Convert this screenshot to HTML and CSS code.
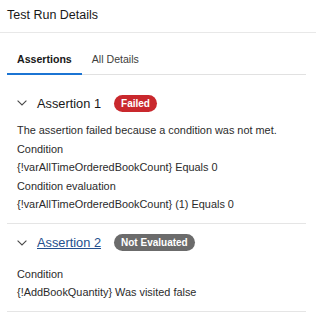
FILE: index.html
```html
<!DOCTYPE html>
<html lang="en">
<head>
    <meta charset="UTF-8">
    <meta name="viewport" content="width=device-width, initial-scale=1.0">
    <title>Test Run Details</title>
    <link rel="stylesheet" href="styles.css">
</head>
<body>
    <div class="header">Test Run Details</div>
    <div class="content">
        <div class="tabs">
            <div class="tab active">Assertions</div>
            <div class="tab">All Details</div>
        </div>

        <div class="section">
            <div class="section-head">
                <svg class="chevron" width="10" height="6" viewBox="0 0 10 6"><path d="M0.6 0.6 L5 5 L9.4 0.6" fill="none" stroke="#4a4a4a" stroke-width="1.1"/></svg>
                <span class="section-title">Assertion 1</span>
                <span class="badge badge-error">Failed</span>
            </div>
            <div class="section-body">
                <div class="line">The assertion failed because a condition was not met.</div>
                <div class="line">Condition</div>
                <div class="line">{!varAllTimeOrderedBookCount} Equals 0</div>
                <div class="line">Condition evaluation</div>
                <div class="line">{!varAllTimeOrderedBookCount} (1) Equals 0</div>
            </div>
        </div>

        <div class="section">
            <div class="section-head">
                <svg class="chevron" width="10" height="6" viewBox="0 0 10 6"><path d="M0.6 0.6 L5 5 L9.4 0.6" fill="none" stroke="#4a4a4a" stroke-width="1.1"/></svg>
                <a class="section-title link" href="#">Assertion 2</a>
                <span class="badge badge-gray">Not Evaluated</span>
            </div>
            <div class="section-body spaced">
                <div class="line">Condition</div>
                <div class="line">{!AddBookQuantity} Was visited false</div>
            </div>
        </div>
    </div>
</body>
</html>
```

FILE: styles.css
```css
body {
    font-family: "Liberation Sans", Arial, sans-serif;
    margin: 0;
    background: #fff;
    color: #2b2b2b;
}
.header {
    height: 32px;
    line-height: 31px;
    padding: 0 7px;
    font-size: 12.5px;
    color: #181818;
    border-bottom: 1px solid #e8e8e8;
}
.content {
    padding: 0 10px 0 7px;
}
.tabs {
    display: flex;
    margin-top: 12px;
    border-bottom: 1px solid #e1e1e1;
}
.tab {
    line-height: 28px;
    padding: 0 10px;
    font-size: 10.6px;
    color: #3e3e3c;
    border-bottom: 2px solid transparent;
    margin-bottom: -1px;
}
.tab.active {
    font-weight: bold;
    color: #181818;
    border-bottom-color: #1b74d3;
}
.section {
    padding: 17px 0 9px 10px;
    border-bottom: 1px solid #e5e5e5;
}
.section + .section {
    padding-top: 8px;
}
.section-head {
    display: flex;
    align-items: center;
    height: 22px;
}
.chevron {
    margin-right: 10px;
}
.section-title {
    font-size: 12.8px;
    color: #181818;
    margin-right: 13px;
}
.link {
    color: #244f8e;
    text-decoration: underline;
}
.badge {
    display: inline-block;
    height: 17px;
    line-height: 17px;
    padding: 0 7px;
    border-radius: 9px;
    font-size: 10px;
    font-weight: bold;
    color: #fff;
}
.badge-error {
    background: #c9282d;
}
.badge-gray {
    background: #6b6b6b;
}
.section-body {
    margin-top: 7px;
    font-size: 10.9px;
}
.section-body.spaced {
    margin-top: 11px;
}
.line {
    line-height: 18.5px;
}
```
